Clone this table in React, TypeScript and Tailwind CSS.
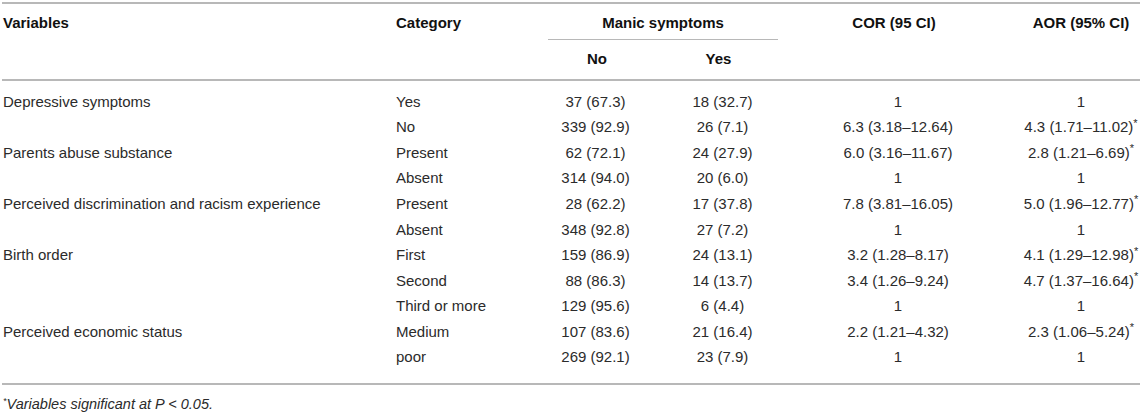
const rows = [
  { v: "Depressive symptoms", c: "Yes", no: "37 (67.3)", yes: "18 (32.7)", cor: "1", aor: "1" },
  { v: "", c: "No", no: "339 (92.9)", yes: "26 (7.1)", cor: "6.3 (3.18–12.64)", aor: "4.3 (1.71–11.02)*" },
  { v: "Parents abuse substance", c: "Present", no: "62 (72.1)", yes: "24 (27.9)", cor: "6.0 (3.16–11.67)", aor: "2.8 (1.21–6.69)*" },
  { v: "", c: "Absent", no: "314 (94.0)", yes: "20 (6.0)", cor: "1", aor: "1" },
  { v: "Perceived discrimination and racism experience", c: "Present", no: "28 (62.2)", yes: "17 (37.8)", cor: "7.8 (3.81–16.05)", aor: "5.0 (1.96–12.77)*" },
  { v: "", c: "Absent", no: "348 (92.8)", yes: "27 (7.2)", cor: "1", aor: "1" },
  { v: "Birth order", c: "First", no: "159 (86.9)", yes: "24 (13.1)", cor: "3.2 (1.28–8.17)", aor: "4.1 (1.29–12.98)*" },
  { v: "", c: "Second", no: "88 (86.3)", yes: "14 (13.7)", cor: "3.4 (1.26–9.24)", aor: "4.7 (1.37–16.64)*" },
  { v: "", c: "Third or more", no: "129 (95.6)", yes: "6 (4.4)", cor: "1", aor: "1" },
  { v: "Perceived economic status", c: "Medium", no: "107 (83.6)", yes: "21 (16.4)", cor: "2.2 (1.21–4.32)", aor: "2.3 (1.06–5.24)*" },
  { v: "", c: "poor", no: "269 (92.1)", yes: "23 (7.9)", cor: "1", aor: "1" },
];

// asterisk sits small and raised, like the journal typesetting
function Val({ text }: { text: string }) {
  if (!text.endsWith("*")) return <>{text}</>;
  return (
    <>
      {text.slice(0, -1)}
      <sup className="text-[11px]">*</sup>
    </>
  );
}

const cols = "grid grid-cols-[394px_152px_115px_115px_244px_118px]";

export default function App() {
  return (
    <div className="w-[1143px] h-[415px] bg-white pt-[2px] pl-[2px] font-['Liberation_Sans',Arial,sans-serif] text-[15px] text-[#2b2b2b]">
      <div className="w-[1138px]">
        {/* header */}
        <div className="border-t-2 border-b-2 border-[#b8b8b8] font-bold text-[#111]">
          <div className={cols}>
            <div className="h-[35px] flex items-center pt-[3px] pl-[1px]">Variables</div>
            <div className="h-[35px] flex items-center pt-[3px]">Category</div>
            <div className="col-span-2 h-[35px] flex items-center justify-center pt-[3px]">Manic symptoms</div>
            <div className="h-[35px] flex items-center justify-center pt-[3px] pr-[12px]">COR (95 CI)</div>
            <div className="h-[35px] flex items-center justify-center pt-[3px]">AOR (95% CI)</div>
          </div>
          <div className={cols}>
            <div />
            <div />
            <div className="col-span-2 h-px bg-[#b8b8b8]" />
            <div />
            <div />
          </div>
          <div className={cols}>
            <div className="h-[39px]" />
            <div className="h-[39px]" />
            <div className="h-[39px] flex items-center justify-center pr-[17px]">No</div>
            <div className="h-[39px] flex items-center justify-center pr-[4px]">Yes</div>
            <div className="h-[39px]" />
            <div className="h-[39px]" />
          </div>
        </div>

        {/* body */}
        <div className="border-b-2 border-[#b8b8b8] pt-[8px] pb-[12px]">
          {rows.map((r, i) => (
            <div key={i} className={cols + " h-[25.6px] items-center"}>
              <div className="pl-[1px] whitespace-nowrap">{r.v}</div>
              <div>{r.c}</div>
              <div className="text-center pr-[20px]">{r.no}</div>
              <div className="text-center pl-[4px]">{r.yes}</div>
              <div className="text-center pr-[4px]">{r.cor}</div>
              <div className="text-center whitespace-nowrap">
                <Val text={r.aor} />
              </div>
            </div>
          ))}
        </div>

        <div className="pt-[9px] pl-[1px] italic text-[14.5px] leading-[20px]">
          <sup className="text-[9px]">*</sup>Variables significant at <span>P</span> &lt; 0.05.
        </div>
      </div>
    </div>
  );
}
